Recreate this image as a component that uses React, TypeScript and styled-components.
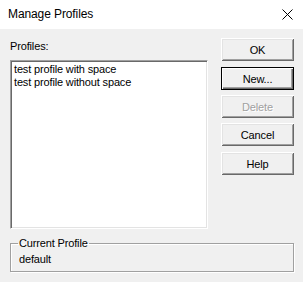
import styled, { createGlobalStyle } from "styled-components";

const GlobalStyle = createGlobalStyle`
  html, body {
    margin: 0;
    padding: 0;
    background: #f0f0f0;
  }
  body {
    font-family: "Liberation Sans", Arial, sans-serif;
  }
`;

const Window = styled.div`
  width: 303px;
  height: 282px;
  background: #f0f0f0;
  display: flex;
  flex-direction: column;
  overflow: hidden;
  font-family: "Liberation Sans", Arial, sans-serif;
  font-size: 11px;
  letter-spacing: -0.15px;
  color: #000;
`;

const TitleBar = styled.div`
  height: 29px;
  background: #fff;
  display: flex;
  align-items: center;
  justify-content: space-between;
  padding: 0 10px 0 8px;
  flex-shrink: 0;
`;

const Title = styled.span`
  font-size: 12px;
  letter-spacing: -0.1px;
  margin-top: -1px;
`;

const CloseIcon = styled.svg`
  width: 11px;
  height: 11px;
  margin-top: -1px;
`;

const Body = styled.div`
  display: flex;
  padding: 9px 9px 0 10px;
`;

const LeftColumn = styled.div`
  display: flex;
  flex-direction: column;
  width: 198px;
`;

const Label = styled.div`
  line-height: 13px;
  padding-top: 2px;
`;

const ListBox = styled.ul`
  list-style: none;
  margin: 7px 0 0;
  padding: 1px 2px;
  height: 169px;
  box-sizing: border-box;
  background: #fff;
  border: 1px solid;
  border-color: #a0a0a0 #fff #fff #a0a0a0;
  box-shadow: inset 1px 1px 0 #696969, inset -1px -1px 0 #e3e3e3;
  padding-left: 3px;
  padding-top: 2px;
`;

const ListItem = styled.li`
  line-height: 13px;
  white-space: nowrap;
`;

const ButtonColumn = styled.div`
  display: flex;
  flex-direction: column;
  margin-left: auto;
`;

const Button = styled.button<{ $isDefault?: boolean; $gap?: number }>`
  width: 73px;
  height: 23px;
  margin: ${(p) => p.$gap ?? 0}px 0 0;
  padding: 0;
  background: #f0f0f0;
  font-family: inherit;
  font-size: 11px;
  letter-spacing: -0.15px;
  color: #000;
  border: ${(p) => (p.$isDefault ? "1px solid #000" : "none")};
  box-shadow: ${(p) =>
    p.$isDefault
      ? "inset 1px 1px 0 #fff, inset -1px -1px 0 #696969, inset -2px -2px 0 #a0a0a0"
      : "inset 1px 1px 0 #fff, inset -1px -1px 0 #696969, inset 2px 2px 0 #e3e3e3, inset -2px -2px 0 #a0a0a0"};

  &:disabled {
    color: #a0a0a0;
    text-shadow: 1px 1px 0 #fff;
  }
`;

const GroupBox = styled.fieldset`
  margin: 8px 9px 0 10px;
  padding: 3px 7px 5px;
  border: 1px solid #a0a0a0;
  box-shadow: inset 1px 1px 0 #fff, 1px 1px 0 #fff;
  min-inline-size: 0;
`;

const Legend = styled.legend`
  padding: 0 1px;
  line-height: 13px;
`;

const Value = styled.div`
  line-height: 13px;
  padding-left: 1px;
`;

export default function App() {
  return (
    <>
      <GlobalStyle />
      <Window>
        <TitleBar>
          <Title>Manage Profiles</Title>
          <CloseIcon viewBox="0 0 11 11">
            <path d="M0.5 0.5 L10.5 10.5 M10.5 0.5 L0.5 10.5" stroke="#000" strokeWidth="1" />
          </CloseIcon>
        </TitleBar>
        <Body>
          <LeftColumn>
            <Label>Profiles:</Label>
            <ListBox>
              <ListItem>test profile with space</ListItem>
              <ListItem>test profile without space</ListItem>
            </ListBox>
          </LeftColumn>
          <ButtonColumn>
            <Button>OK</Button>
            <Button $isDefault $gap={6}>New...</Button>
            <Button disabled $gap={5}>Delete</Button>
            <Button $gap={5}>Cancel</Button>
            <Button $gap={6}>Help</Button>
          </ButtonColumn>
        </Body>
        <GroupBox>
          <Legend>Current Profile</Legend>
          <Value>default</Value>
        </GroupBox>
      </Window>
    </>
  );
}
